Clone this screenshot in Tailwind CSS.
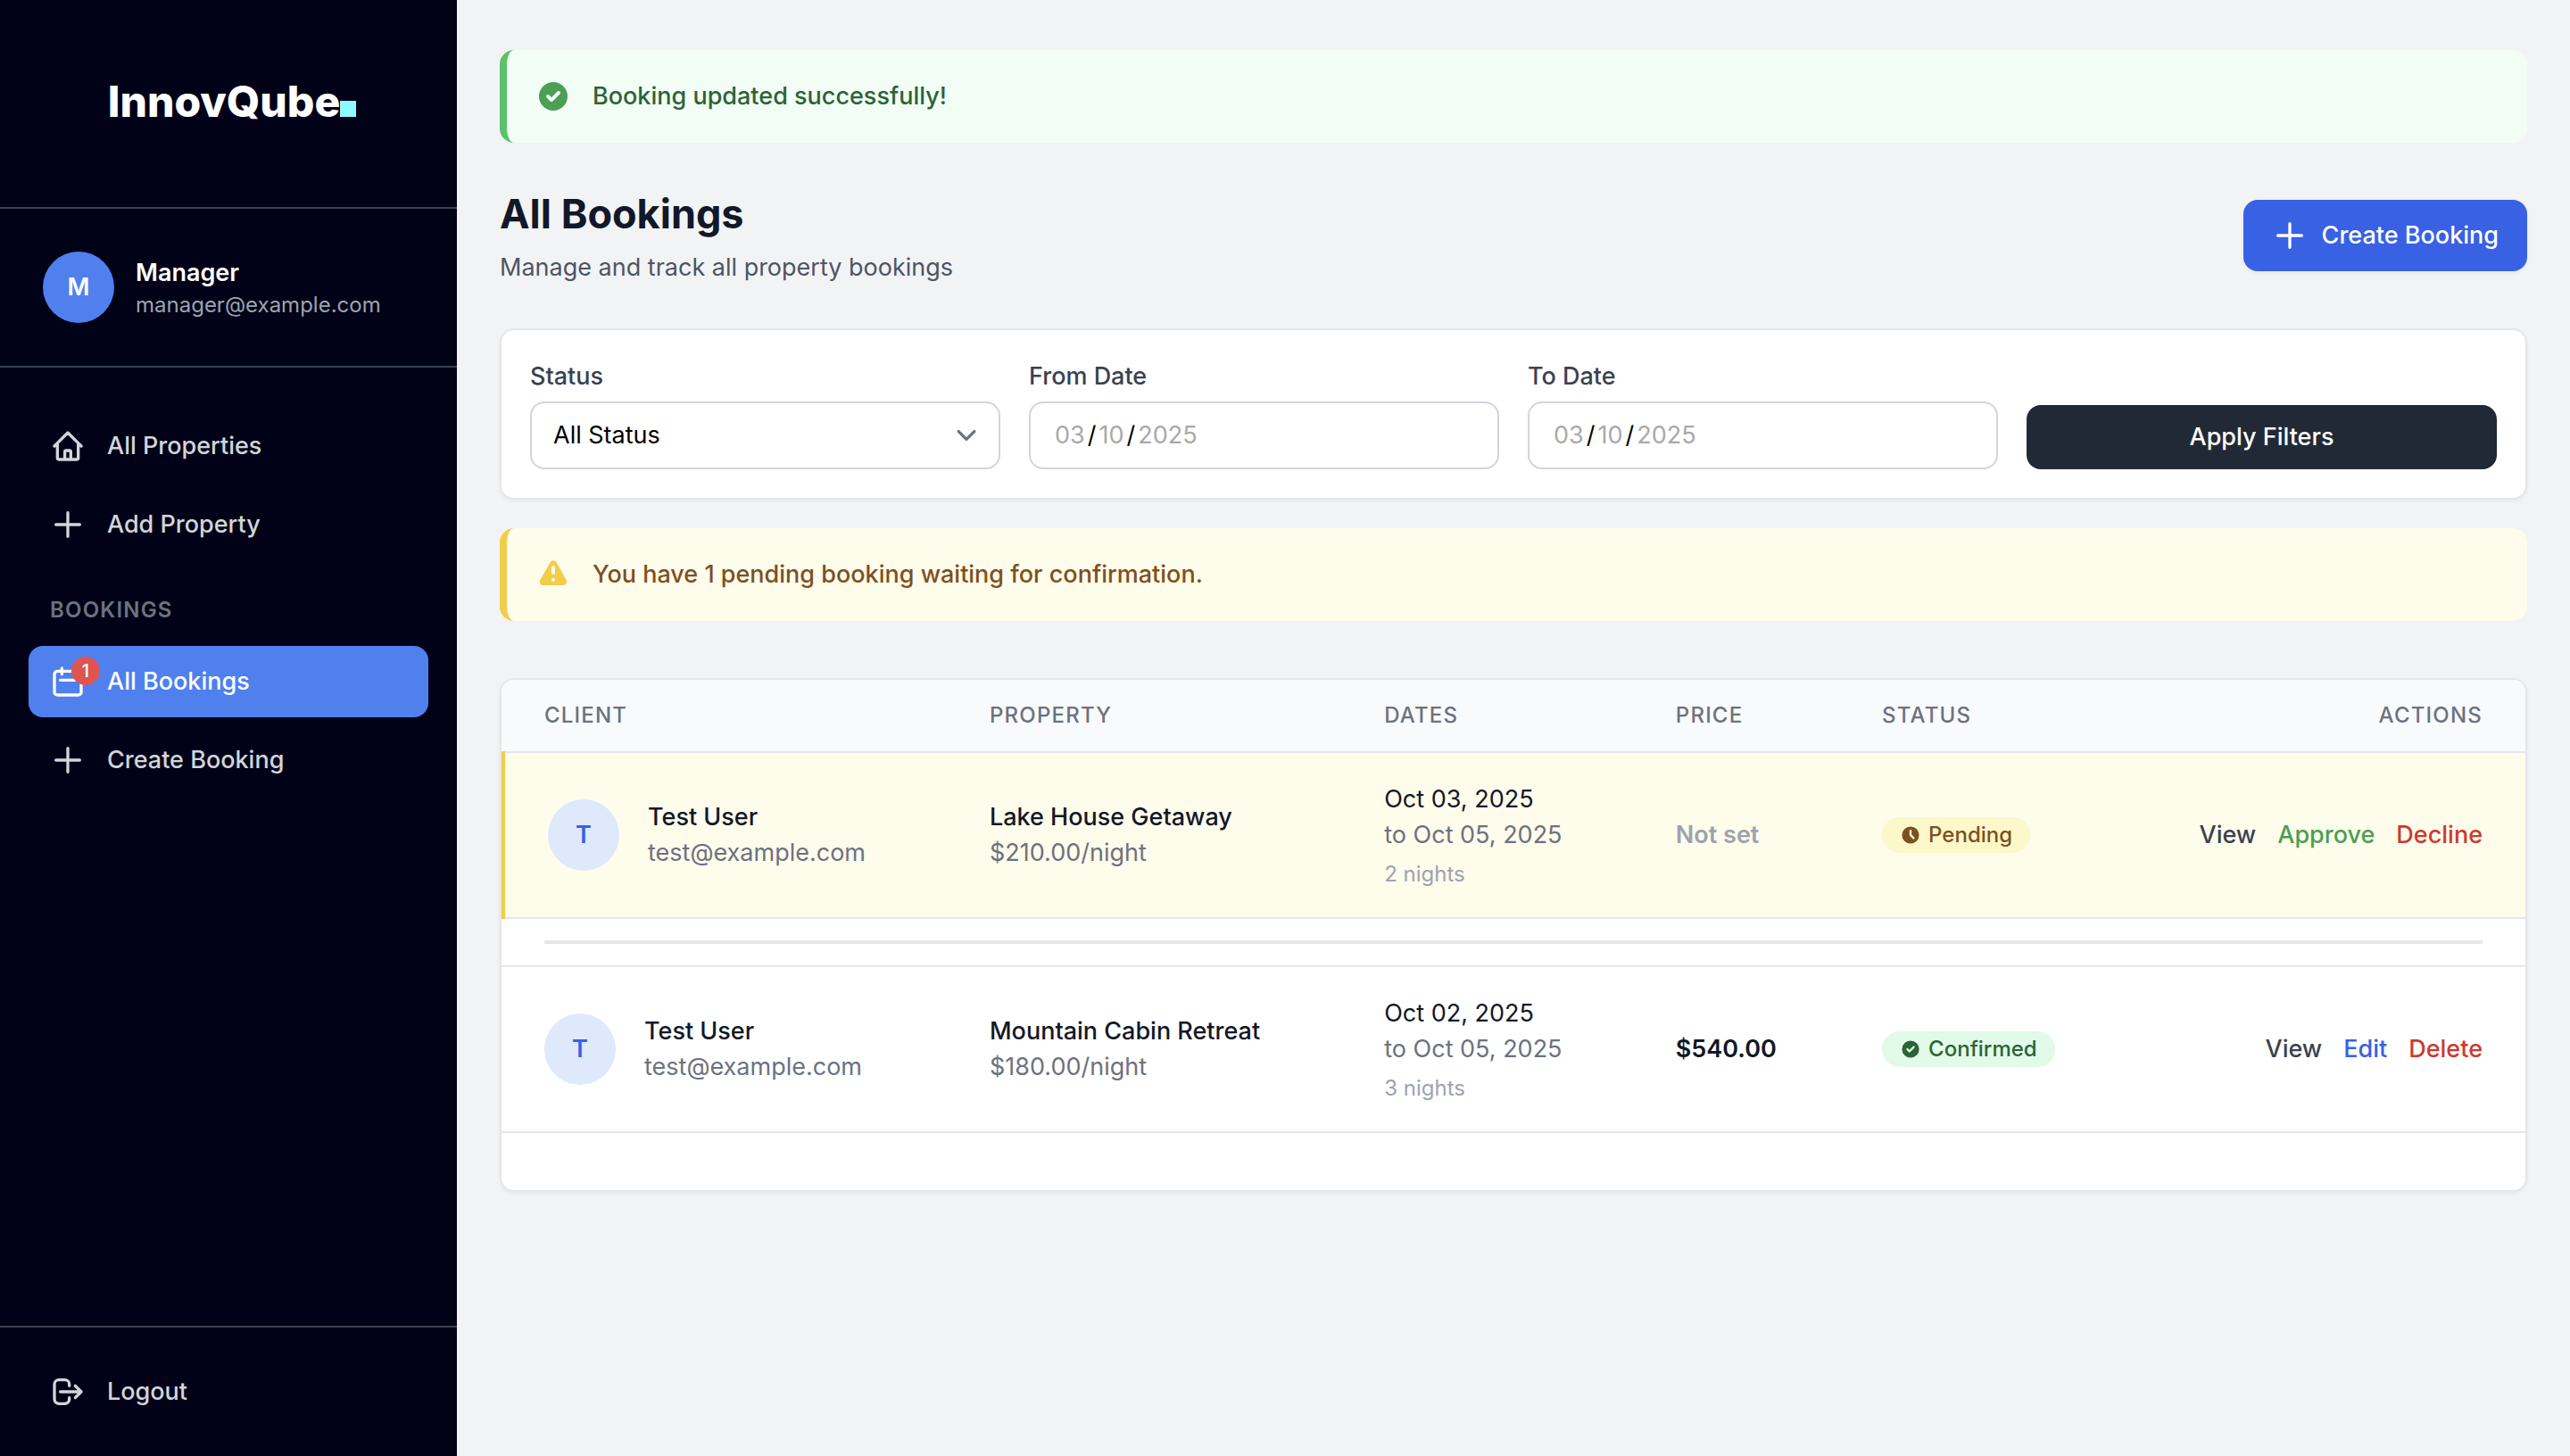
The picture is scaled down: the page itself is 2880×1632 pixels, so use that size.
<!DOCTYPE html>
<html lang="en">
<head>
<meta charset="utf-8">
<meta name="viewport" content="width=device-width, initial-scale=1">
<title>All Bookings</title>
<script src="https://cdn.jsdelivr.net/npm/@tailwindcss/browser@4"></script>
</head>
<body class="flex min-h-screen bg-[#f2f3f5] font-['Inter',sans-serif] text-[27px] leading-10 text-[#121827] antialiased">

<!-- Sidebar -->
<aside class="flex w-128 shrink-0 flex-col bg-[#010217]">
  <a href="#" class="flex items-baseline justify-center border-b-2 border-[#3a4250] pt-[82px] pb-[86px] pl-2 text-5xl leading-16 font-extrabold text-white">InnovQube<span class="size-[18px] bg-[#8dfcfe]"></span></a>

  <div class="flex items-center gap-6 border-b-2 border-[#3a4250] p-12">
    <div class="flex size-20 items-center justify-center rounded-full bg-[#4f80ee] font-semibold text-white">M</div>
    <div>
      <p class="font-semibold text-white">Manager</p>
      <p class="text-2xl leading-8 text-[#9da3ae]">manager@example.com</p>
    </div>
  </div>

  <nav class="flex flex-1 flex-col gap-2 px-8 pt-12 font-medium text-[#d2d5da]">
    <a href="#" class="flex h-20 items-center gap-6 rounded-2xl px-6">
      <svg class="size-10" viewBox="0 0 24 24" fill="none" stroke="currentColor" stroke-width="2" stroke-linecap="round" stroke-linejoin="round"><path d="M3 12l2-2m0 0l7-7 7 7M5 10v10a1 1 0 001 1h3m10-11l2 2m-2-2v10a1 1 0 01-1 1h-3m-6 0a1 1 0 001-1v-4a1 1 0 011-1h2a1 1 0 011 1v4a1 1 0 001 1m-6 0h6"/></svg>
      All Properties
    </a>
    <a href="#" class="flex h-20 items-center gap-6 rounded-2xl px-6">
      <svg class="size-10" viewBox="0 0 24 24" fill="none" stroke="currentColor" stroke-width="2" stroke-linecap="round" stroke-linejoin="round"><path d="M12 4v16m8-8H4"/></svg>
      Add Property
    </a>
    <h2 class="px-6 pt-8 pb-4 text-2xl leading-8 font-semibold tracking-wider text-[#6c727f]">BOOKINGS</h2>
    <a href="#" class="flex h-20 items-center gap-6 rounded-2xl bg-[#4f80ee] px-6 text-white">
      <span class="relative">
        <svg class="size-10" viewBox="0 0 24 24" fill="none" stroke="currentColor" stroke-width="2" stroke-linecap="round" stroke-linejoin="round"><path d="M8 7V3m8 4V3m-9 8h10M5 21h14a2 2 0 002-2V7a2 2 0 00-2-2H5a2 2 0 00-2 2v12a2 2 0 002 2z"/></svg>
        <span class="absolute -top-2 -right-4 flex size-8 items-center justify-center rounded-full bg-[#de5550] text-xl">1</span>
      </span>
      All Bookings
    </a>
    <a href="#" class="flex h-20 items-center gap-6 rounded-2xl px-6">
      <svg class="size-10" viewBox="0 0 24 24" fill="none" stroke="currentColor" stroke-width="2" stroke-linecap="round" stroke-linejoin="round"><path d="M12 4v16m8-8H4"/></svg>
      Create Booking
    </a>
  </nav>

  <div class="border-t-2 border-[#3a4250] p-8">
    <button type="button" class="flex h-20 w-full items-center gap-6 rounded-2xl px-6 font-medium text-[#d2d5da]">
      <svg class="size-10" viewBox="0 0 24 24" fill="none" stroke="currentColor" stroke-width="2" stroke-linecap="round" stroke-linejoin="round"><path d="M17 16l4-4m0 0l-4-4m4 4H7m6 4v1a3 3 0 01-3 3H6a3 3 0 01-3-3V7a3 3 0 013-3h4a3 3 0 013 3v1"/></svg>
      Logout
    </button>
  </div>
</aside>

<main class="min-w-0 flex-1 px-12 pt-14 pb-12">
  <div role="status" class="flex items-center gap-6 rounded-2xl border-l-8 border-[#5cc26a] bg-[#f2fdf5] p-8">
    <svg class="size-10 text-[#4c9f54]" viewBox="0 0 20 20" fill="currentColor"><path fill-rule="evenodd" clip-rule="evenodd" d="M10 18a8 8 0 100-16 8 8 0 000 16zm3.707-9.293a1 1 0 00-1.414-1.414L9 10.586 7.707 9.293a1 1 0 00-1.414 1.414l2 2a1 1 0 001.414 0l4-4z"/></svg>
    <p class="font-medium text-[#2c6336]">Booking updated successfully!</p>
  </div>

  <header class="mt-12 flex items-center justify-between">
    <div>
      <h1 class="text-[45px] leading-16 font-bold">All Bookings</h1>
      <p class="mt-2 text-[#4d5562]">Manage and track all property bookings</p>
    </div>
    <button type="button" class="flex items-center gap-4 rounded-2xl bg-[#3861e4] px-8 py-5 font-medium text-white shadow-[0_2px_4px_rgba(0,0,0,0.05)]">
      <svg class="size-10" viewBox="0 0 24 24" fill="none" stroke="currentColor" stroke-width="2" stroke-linecap="round" stroke-linejoin="round"><path d="M12 4v16m8-8H4"/></svg>
      Create Booking
    </button>
  </header>

  <!-- Filters -->
  <form class="mt-12 grid grid-cols-4 items-end gap-8 rounded-2xl border-2 border-[#e5e6ea] bg-white p-8 shadow-[0_2px_4px_rgba(0,0,0,0.05)]">
    <div>
      <label for="status" class="block font-medium text-[#3a4250]">Status</label>
      <div class="relative mt-2">
        <select id="status" class="block h-19 w-full appearance-none rounded-2xl border-2 border-[#d2d5da] bg-white px-6 text-black">
          <option>All Status</option>
          <option>Pending</option>
          <option>Confirmed</option>
        </select>
        <svg class="pointer-events-none absolute top-4 right-4 size-11 text-[#6c727f]" viewBox="0 0 20 20" fill="none" stroke="currentColor" stroke-width="1.5" stroke-linecap="round" stroke-linejoin="round"><path d="M6 8l4 4 4-4"/></svg>
      </div>
    </div>
    <div>
      <label for="from" class="block font-medium text-[#3a4250]">From Date</label>
      <input id="from" type="date" value="2025-03-10" class="mt-2 block h-19 w-full rounded-2xl border-2 border-[#d2d5da] bg-white px-6 text-black [&::-webkit-calendar-picker-indicator]:hidden [&::-webkit-datetime-edit-month-field]:px-[3px] [&::-webkit-datetime-edit-day-field]:px-[3px] [&::-webkit-datetime-edit-year-field]:px-[3px] [&::-webkit-datetime-edit-month-field]:text-[#a9a9a9] [&::-webkit-datetime-edit-day-field]:text-[#a9a9a9] [&::-webkit-datetime-edit-year-field]:text-[#a9a9a9]">
    </div>
    <div>
      <label for="to" class="block font-medium text-[#3a4250]">To Date</label>
      <input id="to" type="date" value="2025-03-10" class="mt-2 block h-19 w-full rounded-2xl border-2 border-[#d2d5da] bg-white px-6 text-black [&::-webkit-calendar-picker-indicator]:hidden [&::-webkit-datetime-edit-month-field]:px-[3px] [&::-webkit-datetime-edit-day-field]:px-[3px] [&::-webkit-datetime-edit-year-field]:px-[3px] [&::-webkit-datetime-edit-month-field]:text-[#a9a9a9] [&::-webkit-datetime-edit-day-field]:text-[#a9a9a9] [&::-webkit-datetime-edit-year-field]:text-[#a9a9a9]">
    </div>
    <button type="submit" class="rounded-2xl bg-[#222936] py-4 font-medium text-white">Apply Filters</button>
  </form>

  <div role="alert" class="mt-8 flex items-center gap-6 rounded-2xl border-l-8 border-[#f2cd49] bg-[#fefceb] p-8">
    <svg class="size-10 text-[#f2cd49]" viewBox="0 0 20 20" fill="currentColor"><path fill-rule="evenodd" clip-rule="evenodd" d="M8.257 3.099c.765-1.36 2.722-1.36 3.486 0l5.58 9.92c.75 1.334-.213 2.98-1.742 2.98H4.42c-1.53 0-2.493-1.646-1.743-2.98l5.58-9.92zM11 13a1 1 0 11-2 0 1 1 0 012 0zm-1-8a1 1 0 00-1 1v3a1 1 0 002 0V6a1 1 0 00-1-1z"/></svg>
    <p class="font-medium text-[#7e5020]">You have 1 pending booking waiting for confirmation.</p>
  </div>

  <!-- Bookings: the table starts 4px outside the card, so half of the pending row's edge is clipped -->
  <section class="mt-16 overflow-hidden rounded-2xl border-2 border-[#e5e6ea] bg-white pb-16 shadow-[0_2px_4px_rgba(0,0,0,0.05)]">
    <table class="-ml-1 w-[calc(100%+4px)] table-fixed border-collapse text-left">
      <colgroup>
        <col class="w-[22%]"><col class="w-[19.5%]"><col class="w-[14.4%]"><col class="w-[10.2%]"><col class="w-[14%]"><col>
      </colgroup>
      <thead>
        <tr class="border-b-2 border-[#e5e6ea] bg-[#f9fafc] text-2xl leading-8 tracking-wider text-[#6c727f]">
          <th class="px-12 py-6 font-medium">CLIENT</th>
          <th class="px-12 py-6 font-medium">PROPERTY</th>
          <th class="px-12 py-6 font-medium">DATES</th>
          <th class="px-12 py-6 font-medium">PRICE</th>
          <th class="px-12 py-6 font-medium">STATUS</th>
          <th class="px-12 py-6 text-right font-medium">ACTIONS</th>
        </tr>
      </thead>
      <tbody>
        <tr class="border-b-2 border-l-8 border-b-[#e5e6ea] border-l-[#f2cd49] bg-[#fefceb]">
          <td class="px-12 py-8">
            <div class="flex items-center gap-8">
              <div class="flex size-20 items-center justify-center rounded-full bg-[#dee9fb] font-semibold text-[#3861e4]">T</div>
              <div>
                <p class="font-medium">Test User</p>
                <p class="text-[#6c727f]">test@example.com</p>
              </div>
            </div>
          </td>
          <td class="px-12 py-8">
            <p class="font-medium">Lake House Getaway</p>
            <p class="text-[#6c727f]">$210.00/night</p>
          </td>
          <td class="px-12 py-8">
            <p>Oct 03, 2025</p>
            <p class="text-[#6c727f]">to Oct 05, 2025</p>
            <p class="mt-2 text-2xl leading-8 text-[#9da3ae]">2 nights</p>
          </td>
          <td class="px-12 py-8 font-semibold text-[#9da3ae]">Not set</td>
          <td class="px-12 py-8">
            <span class="flex w-fit items-center gap-2 rounded-full bg-[#fdf8c9] px-5 py-1 text-2xl leading-8 font-medium text-[#7e5020]">
              <svg class="size-6" viewBox="0 0 20 20" fill="currentColor"><path fill-rule="evenodd" clip-rule="evenodd" d="M10 18a8 8 0 100-16 8 8 0 000 16zm1-12a1 1 0 10-2 0v4a1 1 0 00.293.707l2.828 2.829a1 1 0 101.415-1.415L11 9.586V6z"/></svg>
              Pending
            </span>
          </td>
          <td class="px-12 py-8">
            <div class="flex justify-end gap-6 font-medium">
              <a href="#" class="text-[#3a4250]">View</a>
              <button type="button" class="text-[#4c9f54]">Approve</button>
              <button type="button" class="text-[#cb3a31]">Decline</button>
            </div>
          </td>
        </tr>
        <tr class="border-b-2 border-[#e5e6ea]">
          <td colspan="6" class="px-12 py-6"><hr class="border-t-4 border-[#e5e6ea]"></td>
        </tr>
        <tr class="border-b-2 border-[#e5e6ea]">
          <td class="px-12 py-8">
            <div class="flex items-center gap-8">
              <div class="flex size-20 items-center justify-center rounded-full bg-[#dee9fb] font-semibold text-[#3861e4]">T</div>
              <div>
                <p class="font-medium">Test User</p>
                <p class="text-[#6c727f]">test@example.com</p>
              </div>
            </div>
          </td>
          <td class="px-12 py-8">
            <p class="font-medium">Mountain Cabin Retreat</p>
            <p class="text-[#6c727f]">$180.00/night</p>
          </td>
          <td class="px-12 py-8">
            <p>Oct 02, 2025</p>
            <p class="text-[#6c727f]">to Oct 05, 2025</p>
            <p class="mt-2 text-2xl leading-8 text-[#9da3ae]">3 nights</p>
          </td>
          <td class="px-12 py-8 font-semibold">$540.00</td>
          <td class="px-12 py-8">
            <span class="flex w-fit items-center gap-2 rounded-full bg-[#e2fae8] px-5 py-1 text-2xl leading-8 font-medium text-[#2c6336]">
              <svg class="size-6" viewBox="0 0 20 20" fill="currentColor"><path fill-rule="evenodd" clip-rule="evenodd" d="M10 18a8 8 0 100-16 8 8 0 000 16zm3.707-9.293a1 1 0 00-1.414-1.414L9 10.586 7.707 9.293a1 1 0 00-1.414 1.414l2 2a1 1 0 001.414 0l4-4z"/></svg>
              Confirmed
            </span>
          </td>
          <td class="px-12 py-8">
            <div class="flex justify-end gap-6 font-medium">
              <a href="#" class="text-[#3a4250]">View</a>
              <a href="#" class="text-[#3861e4]">Edit</a>
              <button type="button" class="text-[#cb3a31]">Delete</button>
            </div>
          </td>
        </tr>
      </tbody>
    </table>
  </section>
</main>
</body>
</html>
